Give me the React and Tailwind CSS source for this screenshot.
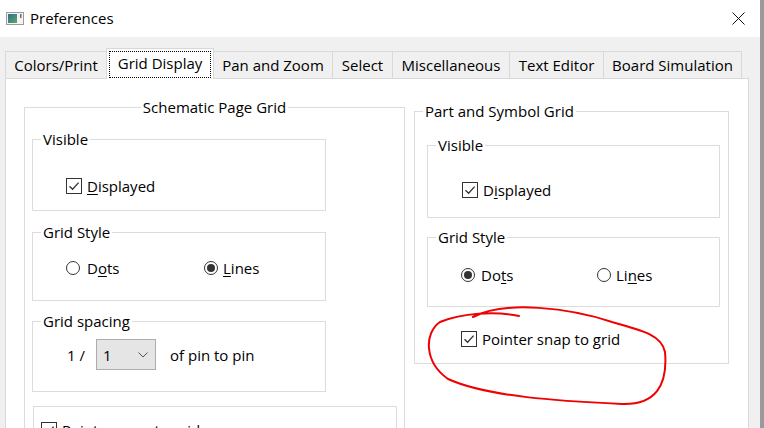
import React from 'react';

const TABS = [
  { label: 'Colors/Print', w: 'w-[102px]' },
  { label: 'Grid Display', w: 'w-[108px]', active: true },
  { label: 'Pan and Zoom', w: 'w-[120px]' },
  { label: 'Select', w: 'w-[61px]' },
  { label: 'Miscellaneous', w: 'w-[118px]' },
  { label: 'Text Editor', w: 'w-[95px]' },
  { label: 'Board Simulation', w: 'w-[139px]' },
];

function Check() {
  return (
    <span className="w-[16px] h-[16px] border border-[#333] bg-white flex items-center justify-center shrink-0">
      <svg width="14" height="14" viewBox="0 0 14 14">
        <path d="M2.5 7.2 L5.6 10.3 L11.6 3.6" stroke="#333" strokeWidth="1.3" fill="none" />
      </svg>
    </span>
  );
}

function Radio({ on }) {
  return (
    <span className="w-[14px] h-[14px] rounded-full border border-[#333] bg-white flex items-center justify-center shrink-0">
      {on && <span className="w-[8px] h-[8px] rounded-full bg-[#333]" />}
    </span>
  );
}

function Group({ title, center, className = '', children }) {
  return (
    <fieldset className={`border border-[#dcdcdc] ${className}`}>
      <legend
        align={center ? 'center' : undefined}
        className={`text-[15px] leading-[20px] px-[2px] ${center ? 'mx-auto' : 'ml-[8px]'}`}
      >
        {title}
      </legend>
      {children}
    </fieldset>
  );
}

export default function App() {
  return (
    <div className="relative w-[764px] h-[428px] overflow-hidden bg-[#9a9a9a] text-black"
      style={{ fontFamily: '"Open Sans", "Noto Sans", sans-serif' }}>
      <div className="w-[760px] h-full flex flex-col">

        {/* Title bar */}
        <div className="h-[37px] bg-white flex items-center shrink-0">
          <svg className="ml-[6px]" width="18" height="13" viewBox="0 0 18 13">
            <rect x="0.5" y="0.5" width="17" height="12" fill="#f4f4f4" stroke="#9b9b9b" />
            <defs>
              <linearGradient id="ig" x1="0" y1="0" x2="1" y2="1">
                <stop offset="0" stopColor="#2f6f8f" />
                <stop offset="1" stopColor="#5aa86a" />
              </linearGradient>
            </defs>
            <rect x="2" y="2" width="9" height="9" fill="url(#ig)" />
            <rect x="14" y="2" width="1.5" height="4" fill="#6b6b6b" />
          </svg>
          <span className="ml-[6px] text-[15px] leading-none">Preferences</span>
          <svg className="ml-auto mr-[15px]" width="13" height="13" viewBox="0 0 13 13">
            <path d="M0.5 0.5 L12.5 12.5 M12.5 0.5 L0.5 12.5" stroke="#111" strokeWidth="1" />
          </svg>
        </div>

        {/* Client area */}
        <div className="flex-1 bg-[#f0f0f0] flex flex-col">
          {/* Tabs */}
          <div className="h-[41px] flex items-end pl-[5px] shrink-0">
            {TABS.map((t, i) => (
              <div key={t.label}
                className={`${t.w} ${i > 0 ? '-ml-px' : ''} border border-b-0 border-[#d9d9d9] flex items-center justify-center text-[15px] ${
                  t.active ? 'h-[31px] -mb-px bg-white relative z-10 px-[2px] pt-[2px] pb-[1px]' : 'h-[27px] bg-[#f0f0f0]'
                }`}>
                {t.active ? (
                  <span className="w-full h-full border border-dotted border-black flex items-center justify-center pb-[3px]">
                    {t.label}
                  </span>
                ) : (
                  t.label
                )}
              </div>
            ))}
          </div>

          {/* Pane */}
          <div className="ml-[5px] w-[744px] flex-1 bg-white border border-b-0 border-[#d9d9d9] flex items-start">

            {/* Schematic Page Grid */}
            <Group title="Schematic Page Grid" center className="ml-[18px] mt-[18px] w-[381px] h-[400px]">
              <div className="pt-[12px] pl-[7px]">
                <Group title="Visible" className="w-[294px]">
                  <div className="pt-[27px] pb-[14px] pl-[33px] flex items-center h-[61px] box-border">
                    <div className="flex items-center gap-[5px] text-[15px] leading-[20px]">
                      <Check />
                      <span><span className="underline underline-offset-2">D</span>isplayed</span>
                    </div>
                  </div>
                </Group>

                <Group title="Grid Style" className="w-[294px] mt-[11px]">
                  <div className="pt-[16px] pb-[22px] pl-[33px] flex items-center text-[15px] leading-[20px]">
                    <div className="w-[138px] flex items-center gap-[7px]">
                      <Radio />
                      <span>D<span className="underline underline-offset-2">o</span>ts</span>
                    </div>
                    <div className="flex items-center gap-[5px]">
                      <Radio on />
                      <span><span className="underline underline-offset-2">L</span>ines</span>
                    </div>
                  </div>
                </Group>

                <Group title="Grid spacing" className="w-[294px] mt-[10px]">
                  <div className="pt-[8px] pb-[21px] pl-[34px] flex items-center text-[15px] leading-[20px]">
                    <span className="w-[29px]">1 /</span>
                    <div className="w-[60px] h-[31px] border border-[#adadad] bg-[#e5e5e5] flex items-center pl-[6px] pr-[7px]">
                      <span className="flex-1">1</span>
                      <svg width="10" height="6" viewBox="0 0 10 6">
                        <path d="M0.5 0.5 L5 5 L9.5 0.5" stroke="#555" strokeWidth="1" fill="none" />
                      </svg>
                    </div>
                    <span className="ml-[14px]">of pin to pin</span>
                  </div>
                </Group>

                <div className="w-[364px] ml-px mt-[14px] border border-[#dcdcdc] pt-[13px] pl-[7px] h-[60px]">
                  <div className="flex items-center gap-[5px] text-[15px] leading-[20px]">
                    <Check />
                    <span>Pointer snap to grid</span>
                  </div>
                </div>
              </div>
            </Group>

            {/* Part and Symbol Grid */}
            <Group title="Part and Symbol Grid" className="ml-[9px] mt-[22px] w-[315px]">
              <div className="pt-[14px] pl-[12px] pb-[14px]">
                <Group title="Visible" className="w-[293px]">
                  <div className="pt-[25px] pb-[17px] pl-[34px] flex items-center">
                    <div className="flex items-center gap-[5px] text-[15px] leading-[20px]">
                      <Check />
                      <span>D<span className="underline underline-offset-2">i</span>splayed</span>
                    </div>
                  </div>
                </Group>

                <Group title="Grid Style" className="w-[293px] mt-[9px]">
                  <div className="pt-[18px] pb-[21px] pl-[33px] flex items-center text-[15px] leading-[20px]">
                    <div className="w-[136px] flex items-center gap-[6px]">
                      <Radio on />
                      <span>Do<span className="underline underline-offset-2">t</span>s</span>
                    </div>
                    <div className="flex items-center gap-[5px]">
                      <Radio />
                      <span>Li<span className="underline underline-offset-2">n</span>es</span>
                    </div>
                  </div>
                </Group>

                <div className="mt-[22px] pl-[34px] flex items-center gap-[5px] text-[15px] leading-[20px]">
                  <Check />
                  <span>Pointer snap to <span className="underline underline-offset-2">g</span>rid</span>
                </div>
              </div>
            </Group>
          </div>
        </div>
      </div>

      {/* Hand-drawn red annotation */}
      <svg className="absolute inset-0 pointer-events-none" width="764" height="428" viewBox="0 0 764 428">
        <path
          d="M519 316 C495 311 462 313 440 322 C424 333 424 362 448 379 C488 397 560 401 622 404 C655 405 668 386 665 352 C662 336 645 331 612 322 C570 308 505 300 473 317"
          stroke="#f00000" strokeWidth="2" fill="none" strokeLinecap="round" />
      </svg>
    </div>
  );
}
